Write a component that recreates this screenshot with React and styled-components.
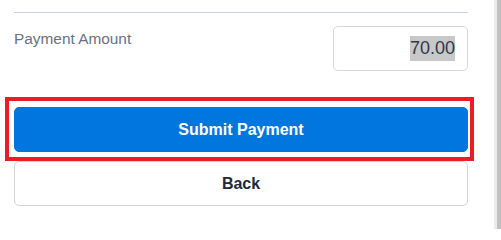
import React from "react";
import styled, { createGlobalStyle } from "styled-components";

const GlobalStyle = createGlobalStyle`
  * { box-sizing: border-box; }
  html, body { margin: 0; padding: 0; background: #ffffff; }
  body { font-family: "Liberation Sans", Arial, sans-serif; }
`;

const Page = styled.div`
  display: flex;
  width: 501px;
  height: 229px;
  overflow: hidden;
  background: #ffffff;
`;

const Content = styled.div`
  flex: 1;
  min-width: 0;
  padding: 12px 26px 0 14px;
  display: flex;
  flex-direction: column;
`;

const Scrollbar = styled.div`
  width: 7px;
  flex: none;
  border-left: 3px solid #ebebeb;
  background: #c1c1c1;
`;

const Divider = styled.div`
  height: 1px;
  background: #cbd1db;
`;

const AmountRow = styled.div`
  display: flex;
  justify-content: space-between;
  align-items: flex-start;
  margin-top: 13px;
`;

const Label = styled.div`
  margin-top: 4px;
  font-size: 15.4px;
  line-height: 17px;
  color: #687186;
`;

const AmountBox = styled.div`
  width: 135px;
  height: 45px;
  padding: 9px 12px;
  border: 1px solid #d3d8e0;
  border-radius: 5px;
  text-align: right;
  font-size: 18px;
  color: #313848;
  background: #ffffff;
`;

const Selected = styled.span`
  display: inline-block;
  height: 25px;
  line-height: 25px;
  background: #c8c8c8;
`;

const Highlight = styled.div`
  margin: 26px -6px 0 -9px;
  padding: 6px 2px 5px 5px;
  border: 4px solid #ec1c24;
`;

const Button = styled.button`
  display: block;
  width: 100%;
  height: 45px;
  margin: 0;
  padding: 0;
  border-radius: 5px;
  font-family: "Liberation Sans", Arial, sans-serif;
  font-size: 16px;
  font-weight: 700;
  cursor: pointer;
  border: 1px solid ${(p) => (p.$primary ? "#0176de" : "#cfd4dc")};
  background: ${(p) => (p.$primary ? "#0176de" : "#ffffff")};
  color: ${(p) => (p.$primary ? "#ffffff" : "#232838")};
`;

export default function App() {
  return (
    <>
      <GlobalStyle />
      <Page>
        <Content>
          <Divider />
          <AmountRow>
            <Label>Payment Amount</Label>
            <AmountBox>
              <Selected>70.00</Selected>
            </AmountBox>
          </AmountRow>
          <Highlight>
            <Button $primary>Submit Payment</Button>
          </Highlight>
          <Button>Back</Button>
        </Content>
        <Scrollbar />
      </Page>
    </>
  );
}
